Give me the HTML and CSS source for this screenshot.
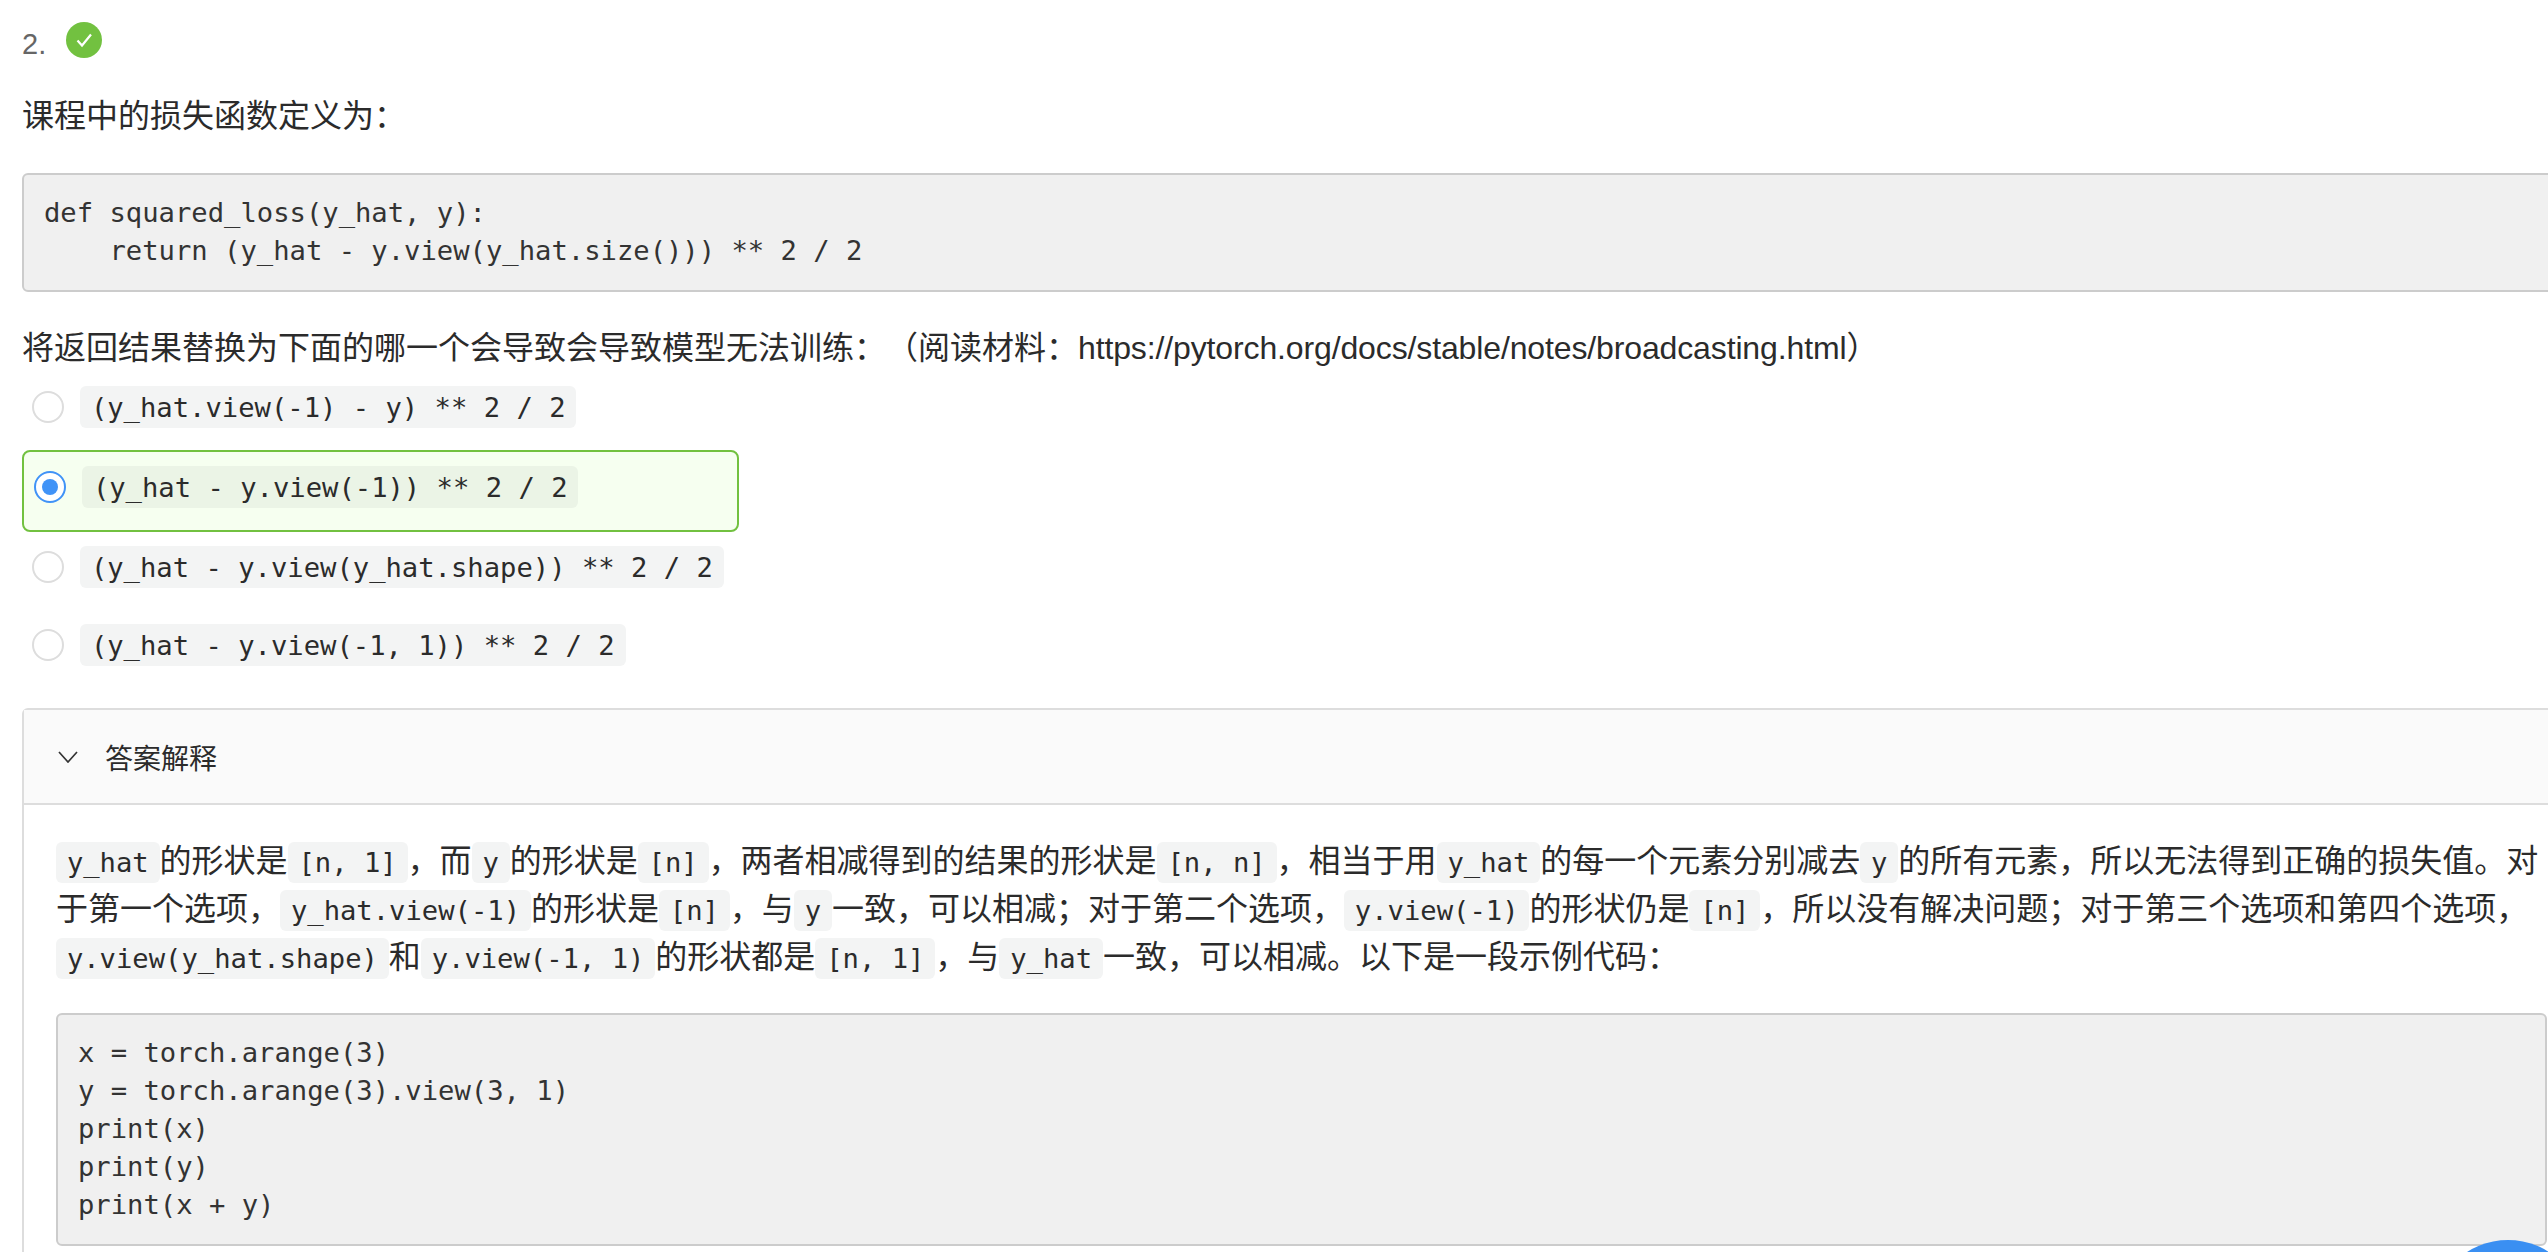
FILE: index.html
```html
<!DOCTYPE html>
<html lang="zh-CN">
<head>
    <meta charset="UTF-8">
    <title>课程测验</title>
    <link rel="stylesheet" href="styles.css">
</head>
<body>
    <div class="question">
        <div class="question-head">
            <span class="question-num">2.</span>
            <svg class="check-icon" width="36" height="36" viewBox="0 0 36 36" xmlns="http://www.w3.org/2000/svg">
                <circle cx="18" cy="18" r="18" fill="#72c140"></circle>
                <path d="M11.5 18.5 L16 23.5 L25 12.5" fill="none" stroke="#fff" stroke-width="2.2"></path>
            </svg>
        </div>
        <p class="text">课程中的损失函数定义为：</p>
        <pre class="code-block">def squared_loss(y_hat, y):
    return (y_hat - y.view(y_hat.size())) ** 2 / 2</pre>
        <p class="text">将返回结果替换为下面的哪一个会导致会导致模型无法训练：（阅读材料：<span class="url">https://pytorch.org/docs/stable/notes/broadcasting.html</span>）</p>

        <div class="options">
            <div class="option option-first">
                <span class="radio"></span>
                <code>(y_hat.view(-1) - y) ** 2 / 2</code>
            </div>
            <div class="option option-selected">
                <span class="radio radio-on"></span>
                <code>(y_hat - y.view(-1)) ** 2 / 2</code>
            </div>
            <div class="option">
                <span class="radio"></span>
                <code>(y_hat - y.view(y_hat.shape)) ** 2 / 2</code>
            </div>
            <div class="option">
                <span class="radio"></span>
                <code>(y_hat - y.view(-1, 1)) ** 2 / 2</code>
            </div>
        </div>

        <div class="explain">
            <div class="explain-head">
                <svg class="chevron" width="20" height="12" viewBox="0 0 20 12" xmlns="http://www.w3.org/2000/svg">
                    <path d="M1 1 L10 11 L19 1" fill="none" stroke="#333" stroke-width="1.7"></path>
                </svg>
                <span>答案解释</span>
            </div>
            <div class="explain-body">
                <p class="explain-text"><code>y_hat</code>的形状是<code>[n, 1]</code>，而<code>y</code>的形状是<code>[n]</code>，两者相减得到的结果的形状是<code>[n, n]</code>，相当于用<code>y_hat</code>的每一个元素分别减去<code>y</code>的所有元素，所以无法得到正确的损失值。对于第一个选项，<code>y_hat.view(-1)</code>的形状是<code>[n]</code>，与<code>y</code>一致，可以相减；对于第二个选项，<code>y.view(-1)</code>的形状仍是<code>[n]</code>，所以没有解决问题；对于第三个选项和第四个选项，<code>y.view(y_hat.shape)</code>和<code>y.view(-1, 1)</code>的形状都是<code>[n, 1]</code>，与<code>y_hat</code>一致，可以相减。以下是一段示例代码：</p>
                <pre class="code-block">x = torch.arange(3)
y = torch.arange(3).view(3, 1)
print(x)
print(y)
print(x + y)</pre>
            </div>
        </div>
    </div>
    <div class="float-btn"></div>
</body>
</html>
```

FILE: styles.css
```css
*{
    margin: 0;
    padding: 0;
    box-sizing: border-box;
}
html,body{
    height: 100%;
    overflow: hidden;
}
body{
    background-color: #fff;
    color: #2b2b2b;
    font-family: "Liberation Sans", "Noto Sans CJK SC", sans-serif;
    font-size: 32px;
    text-spacing-trim: space-all;
    position: relative;
}
.question{
    width: 2559px;
    margin-left: 22px;
    padding-top: 22px;
}
.question-head{
    display: flex;
    align-items: center;
    height: 36px;
}
.question-num{
    width: 44px;
    font-size: 29px;
    color: #666;
    position: relative;
    top: 4px;
}
.check-icon{
    display: block;
}
.text{
    line-height: 48px;
}
.question-head + .text{
    margin-top: 34px;
}
.url{
    letter-spacing: -0.13px;
}
.code-block{
    margin: 32px 0;
    padding: 19px 20px 20px;
    background-color: #f0f0f0;
    border: 2px solid #ccc;
    border-radius: 6px;
    font-family: "DejaVu Sans Mono", monospace;
    font-size: 27.2px;
    line-height: 38px;
    color: #333;
}
.text + .code-block{
    margin-top: 33px;
}
code{
    padding: 0.2em 0.4em;
    background-color: #f3f4f4;
    border-radius: 6px;
    font-family: "DejaVu Sans Mono", monospace;
    font-size: 27.2px;
    line-height: 1;
}
.options{
    margin-top: 14px;
}
.option{
    display: flex;
    align-items: center;
    gap: 16px;
    height: 42px;
    margin-bottom: 36px;
    margin-left: 10px;
}
.option code{
    line-height: 31px;
}
.option-first{
    margin-bottom: 22px;
}
.option-selected{
    width: 717px;
    height: 82px;
    margin-left: 0;
    margin-bottom: 14px;
    padding: 14px 10px 22px;
    background-color: #f6fff0;
    border: 2px solid #72c140;
    border-radius: 8px;
}
.option-selected code{
    background-color: #ebf4e6;
}
.radio{
    flex: none;
    width: 32px;
    height: 32px;
    border: 2px solid #ddd;
    border-radius: 50%;
    background-color: #fff;
    display: flex;
    align-items: center;
    justify-content: center;
}
.radio-on{
    border-color: #4093f7;
}
.radio-on::after{
    content: "";
    width: 16px;
    height: 16px;
    border-radius: 50%;
    background-color: #4093f7;
}
.explain{
    margin-top: 42px;
    border: 2px solid #ddd;
    border-radius: 6px;
}
.explain-head{
    display: flex;
    align-items: center;
    gap: 27px;
    height: 95px;
    padding-left: 34px;
    background-color: #fafafa;
    border-bottom: 2px solid #ddd;
    font-size: 28px;
}
.chevron{
    display: block;
}
.explain-body{
    padding: 32px 32px;
}
.explain-text{
    line-height: 48px;
}
.float-btn{
    position: absolute;
    left: 2432px;
    top: 1240px;
    width: 152px;
    height: 152px;
    border-radius: 50%;
    background-color: #3a8ff2;
}
```
